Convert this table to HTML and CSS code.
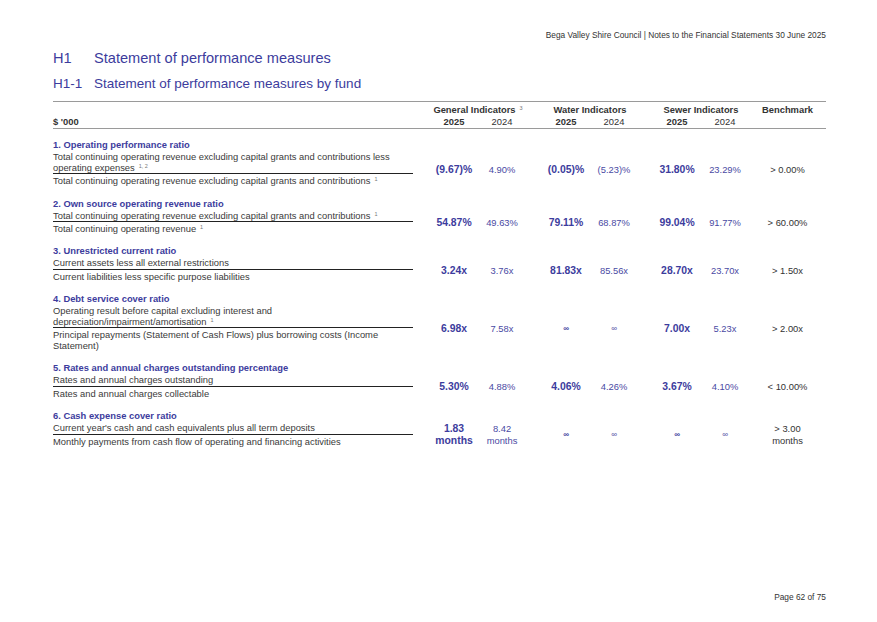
FILE: index.html
```html
<!DOCTYPE html>
<html lang="en">
<head>
<meta charset="utf-8">
<title>H1 Statement of performance measures</title>
<link rel="stylesheet" href="styles.css">
</head>
<body>
<div class="page">
  <header class="running">Bega Valley Shire Council | Notes to the Financial Statements 30 June 2025</header>
  <h1 class="h1"><span class="num">H1</span><span>Statement of performance measures</span></h1>
  <h2 class="h2"><span class="num">H1-1</span><span>Statement of performance measures by fund</span></h2>

  <div class="tbl">
    <div class="thead cols">
      <div class="unit">$ '000</div>
      <div class="grp g1">General Indicators<sup class="sup">3</sup></div>
      <div class="grp g2">Water Indicators</div>
      <div class="grp g3">Sewer Indicators</div>
      <div class="bench-h">Benchmark</div>
      <div class="yr y1 b">2025</div>
      <div class="yr y2 p16">2024</div>
      <div class="yr y3 b">2025</div>
      <div class="yr y4 p15">2024</div>
      <div class="yr y5 b">2025</div>
      <div class="yr y6">2024</div>
    </div>

    <section class="sec">
      <div class="title">1. Operating performance ratio</div>
      <div class="cols">
        <div class="label">
          <div class="numer"><span class="ln">Total continuing operating revenue excluding capital grants and contributions less</span><span class="ln">operating expenses<sup class="sup">1, 2</sup></span></div>
          <div class="denom">Total continuing operating revenue excluding capital grants and contributions<sup class="sup">1</sup></div>
        </div>
        <div class="v cur">(9.67)%</div>
        <div class="v prev p16">4.90%</div>
        <div class="v cur">(0.05)%</div>
        <div class="v prev p15">(5.23)%</div>
        <div class="v cur">31.80%</div>
        <div class="v prev">23.29%</div>
        <div class="v bm">&gt; 0.00%</div>
      </div>
    </section>

    <section class="sec">
      <div class="title">2. Own source operating revenue ratio</div>
      <div class="cols">
        <div class="label">
          <div class="numer">Total continuing operating revenue excluding capital grants and contributions<sup class="sup">1</sup></div>
          <div class="denom">Total continuing operating revenue<sup class="sup">1</sup></div>
        </div>
        <div class="v cur">54.87%</div>
        <div class="v prev p16">49.63%</div>
        <div class="v cur">79.11%</div>
        <div class="v prev p15">68.87%</div>
        <div class="v cur">99.04%</div>
        <div class="v prev">91.77%</div>
        <div class="v bm">&gt; 60.00%</div>
      </div>
    </section>

    <section class="sec">
      <div class="title">3. Unrestricted current ratio</div>
      <div class="cols">
        <div class="label">
          <div class="numer">Current assets less all external restrictions</div>
          <div class="denom">Current liabilities less specific purpose liabilities</div>
        </div>
        <div class="v cur">3.24x</div>
        <div class="v prev p16">3.76x</div>
        <div class="v cur">81.83x</div>
        <div class="v prev p15">85.56x</div>
        <div class="v cur">28.70x</div>
        <div class="v prev">23.70x</div>
        <div class="v bm">&gt; 1.50x</div>
      </div>
    </section>

    <section class="sec">
      <div class="title">4. Debt service cover ratio</div>
      <div class="cols">
        <div class="label">
          <div class="numer"><span class="ln">Operating result before capital excluding interest and</span><span class="ln">depreciation/impairment/amortisation<sup class="sup">1</sup></span></div>
          <div class="denom">Principal repayments (Statement of Cash Flows) plus borrowing costs (Income Statement)</div>
        </div>
        <div class="v cur">6.98x</div>
        <div class="v prev p16">7.58x</div>
        <div class="v cur inf">∞</div>
        <div class="v prev p15 inf">∞</div>
        <div class="v cur">7.00x</div>
        <div class="v prev">5.23x</div>
        <div class="v bm">&gt; 2.00x</div>
      </div>
    </section>

    <section class="sec">
      <div class="title">5. Rates and annual charges outstanding percentage</div>
      <div class="cols">
        <div class="label">
          <div class="numer">Rates and annual charges outstanding</div>
          <div class="denom">Rates and annual charges collectable</div>
        </div>
        <div class="v cur">5.30%</div>
        <div class="v prev p16">4.88%</div>
        <div class="v cur">4.06%</div>
        <div class="v prev p15">4.26%</div>
        <div class="v cur">3.67%</div>
        <div class="v prev">4.10%</div>
        <div class="v bm">&lt; 10.00%</div>
      </div>
    </section>

    <section class="sec">
      <div class="title">6. Cash expense cover ratio</div>
      <div class="cols">
        <div class="label">
          <div class="numer">Current year's cash and cash equivalents plus all term deposits</div>
          <div class="denom">Monthly payments from cash flow of operating and financing activities</div>
        </div>
        <div class="v cur">1.83<br>months</div>
        <div class="v prev p16">8.42<br>months</div>
        <div class="v cur inf">∞</div>
        <div class="v prev p15 inf">∞</div>
        <div class="v cur inf">∞</div>
        <div class="v prev inf">∞</div>
        <div class="v bm">&gt; 3.00<br>months</div>
      </div>
    </section>
  </div>

  <footer class="pageno">Page 62 of 75</footer>
</div>
</body>
</html>
```

FILE: styles.css
```css
html, body {
  margin: 0;
  padding: 0;
  background: #ffffff;
}

body {
  font-family: "Liberation Sans", Arial, sans-serif;
  color: #333333;
}

.page {
  width: 877px;
  height: 622px;
  box-sizing: border-box;
  padding: 30px 51px 0 53px;
  display: flex;
  flex-direction: column;
}

.running {
  text-align: right;
  font-size: 8.33px;
  line-height: 11px;
  color: #333333;
}

.h1,
.h2 {
  margin: 0;
  font-weight: normal;
  color: #3c3c9d;
  display: flex;
}

.h1 {
  font-size: 14.6px;
  line-height: 18px;
  margin-top: 7.7px;
}

.h2 {
  font-size: 13.5px;
  line-height: 17px;
  margin-top: 8px;
}

.num {
  width: 41px;
  flex: none;
}

.tbl {
  margin-top: 9px;
}

.cols {
  display: grid;
  grid-template-columns: 377px 48px 64px 48px 63px 48px 48px 77px;
}

.thead {
  border-top: 1px solid #9a9a9a;
  border-bottom: 1px solid #9a9a9a;
  padding-top: 2px;
  font-size: 9.37px;
  line-height: 12px;
  color: #333333;
}

.unit {
  grid-column: 1;
  grid-row: 2;
  font-weight: bold;
}

.grp {
  grid-row: 1;
  text-align: center;
  font-weight: bold;
}

.g1 { grid-column: 2 / 4; padding-right: 16px; }
.g2 { grid-column: 4 / 6; padding-right: 15px; }
.g3 { grid-column: 6 / 8; }

.bench-h {
  grid-column: 8;
  grid-row: 1;
  text-align: center;
  font-weight: bold;
}

.yr {
  grid-row: 2;
  text-align: center;
}

.y1 { grid-column: 2; }
.y2 { grid-column: 3; }
.y3 { grid-column: 4; }
.y4 { grid-column: 5; }
.y5 { grid-column: 6; }
.y6 { grid-column: 7; }

.b { font-weight: bold; }
.p16 { padding-right: 16px; }
.p15 { padding-right: 15px; }

.sup {
  display: inline-block;
  font-size: 5.5px;
  line-height: 5px;
  vertical-align: 3px;
  margin-left: 4px;
  color: #777777;
  font-weight: normal;
}

.sec {
  padding-top: 11.6px;
}

.title {
  font-size: 9.37px;
  line-height: 11px;
  font-weight: bold;
  color: #3c3c9d;
  margin-bottom: 1px;
}

.label {
  padding-right: 17px;
  font-size: 9.37px;
  line-height: 10.6px;
  color: #3a3a3a;
}

.ln {
  display: block;
}

.numer {
  border-bottom: 1px solid #222222;
}

.denom {
  padding-top: 2px;
}

.v {
  align-self: center;
  text-align: center;
  color: #3c3c9d;
  line-height: 12px;
}

.cur {
  font-size: 10.4px;
  font-weight: bold;
}

.prev {
  font-size: 9.37px;
  color: #4a4aa3;
}

.inf {
  font-size: 8px;
}

.bm {
  font-size: 9.37px;
  color: #333333;
}

.pageno {
  margin-top: auto;
  text-align: right;
  font-size: 8.33px;
  line-height: 11px;
  padding-bottom: 19.5px;
  color: #333333;
}
```
